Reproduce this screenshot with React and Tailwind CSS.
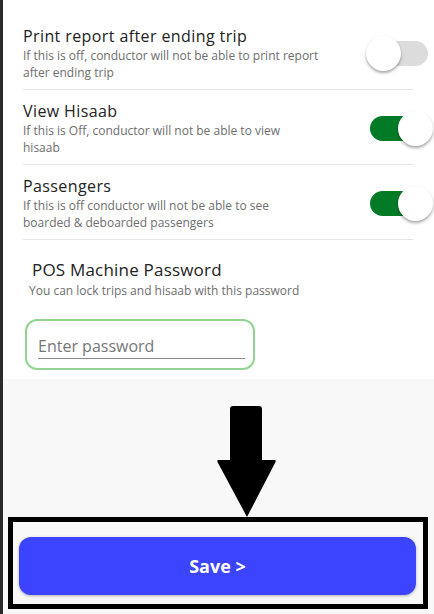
import React, { useState } from 'react'

const settings = [
  {
    title: 'Print report after ending trip',
    lines: ['If this is off, conductor will not be able to print report', 'after ending trip'],
    on: false,
  },
  {
    title: 'View Hisaab',
    lines: ['If this is Off, conductor will not be able to view', 'hisaab'],
    on: true,
  },
  {
    title: 'Passengers',
    lines: ['If this is off conductor will not be able to see', 'boarded & deboarded passengers'],
    on: true,
  },
]

const Toggle = ({ on, onClick }) => (
  <button onClick={onClick} className='relative w-[67px] h-[35px] shrink-0 -mr-[20px]'>
    <span className={`absolute left-[4px] right-[5px] top-[5px] h-[25px] rounded-full ${on ? 'bg-[#037b26]' : 'bg-[#dcdcdc]'}`}></span>
    <span className={`absolute top-0 w-[35px] h-[35px] rounded-full bg-white shadow-[0_2px_3px_rgba(0,0,0,0.35)] ${on ? 'right-0' : 'left-0'}`}></span>
  </button>
)

const App = () => {
  const [toggles, setToggles] = useState(settings.map(s => s.on))
  const [password, setPassword] = useState('')

  return (
    <div className="font-['Open_Sans',sans-serif] w-[434px] h-[614px] overflow-hidden flex flex-col border-l-[3px] border-[#2b2b2b] bg-[#f8f8f8]">
      <div className='bg-white pl-[20px] pr-[21px] pt-[15px] pb-[9px]'>
        {settings.map((s, i) => (
          <div key={i} className='flex items-center border-b border-[#e6e6e6] pt-[10px] pb-[8px]'>
            <div className='flex-1 min-w-0'>
              <h3 className='text-[16px] leading-[22px] tracking-[0.4px] font-medium text-[#222]'>{s.title}</h3>
              <p className='text-[12px] leading-[17px] text-[#6e6e6e]'>
                {s.lines[0]}<br />{s.lines[1]}
              </p>
            </div>
            <Toggle
              on={toggles[i]}
              onClick={() => setToggles(t => t.map((v, j) => (j === i ? !v : v)))}
            />
          </div>
        ))}
        <div className='pt-[18px]'>
          <h2 className='pl-[9px] text-[17px] leading-[24px] tracking-[0.2px] font-medium text-[#222]'>POS Machine Password</h2>
          <p className='pl-[6px] text-[12px] leading-[17px] text-[#6e6e6e]'>You can lock trips and hisaab with this password</p>
          <div className='mt-[20px] ml-[2px] w-[230px] h-[51px] rounded-[12px] border-2 border-[#93d493] flex items-center pl-[11px] pr-[8px]'>
            <input
              type='password'
              value={password}
              onChange={e => setPassword(e.target.value)}
              placeholder='Enter password'
              className='w-full mt-[4px] pb-[1px] outline-none border-b border-[#8a8a8a] text-[16px] leading-[22px] text-[#333] placeholder:text-[#777] bg-transparent'
            />
          </div>
        </div>
      </div>

      <div className='flex-1 flex flex-col pt-[27px]'>
        <svg width='59' height='111' viewBox='0 0 59 111' className='ml-[214px] shrink-0'>
          <path d='M16 0 H42 Q45 0 45 3 V54 H58 Q59 54 58.5 56 L30 111 L0.5 56 Q0 54 1 54 H13 V3 Q13 0 16 0 Z' fill='#000' />
        </svg>
        <div className='ml-[5px] w-[420px] h-[92px] border-[5px] border-black pt-[15px] pl-[6px]'>
          <button className='w-[397px] h-[58px] rounded-[12px] bg-[#3c44ff] text-white text-[18px] font-bold shadow-[0_1px_3px_rgba(0,0,0,0.3)]'>
            Save &gt;
          </button>
        </div>
      </div>
    </div>
  )
}

export default App
